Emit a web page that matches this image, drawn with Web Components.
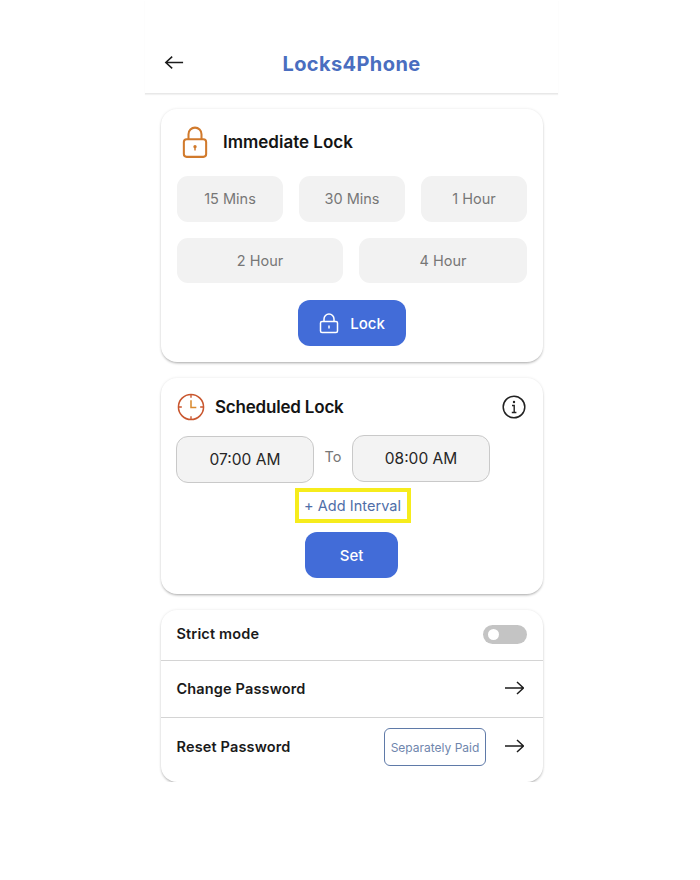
<!DOCTYPE html>
<html>
<head>
<meta charset="utf-8">
<style>
html,body{margin:0;padding:0;background:#fff}
body{font-family:Inter,"Liberation Sans",sans-serif;color:#161616}
</style>
</head>
<body>
<lock-app>
  <app-header slot="header" title="Locks4Phone"></app-header>

  <lock-card style="height:253px;margin-top:15px">
    <card-title gap="15" style="margin-top:-1px">
      <svg slot="icon" style="margin-left:5px" width="26" height="33" viewBox="0 0 28 35" fill="none" stroke="#d17a2c" stroke-width="2.200"><rect x="2" y="14" width="24" height="19" rx="3"/><path d="M7 14V8.500a7 7 0 0 1 14 0V14"/><circle cx="14" cy="22" r="1.800" fill="#d17a2c" stroke="none"/><path d="M14 22v4" stroke-width="1.600"/></svg>
      Immediate Lock
    </card-title>
    <div style="display:grid;grid-template-columns:repeat(3,1fr);gap:16px;margin-top:16px">
      <time-chip>15 Mins</time-chip><time-chip>30 Mins</time-chip><time-chip>1 Hour</time-chip>
    </div>
    <div style="display:grid;grid-template-columns:166px 1fr;gap:16px;margin-top:16px">
      <time-chip>2 Hour</time-chip><time-chip>4 Hour</time-chip>
    </div>
    <div style="display:flex;justify-content:center;margin-top:17px">
      <blue-button width="108" style="gap:11px">
        <svg width="20" height="21" viewBox="0 0 20 21" fill="none" stroke="#fff" stroke-width="1.500"><rect x="1.500" y="8.500" width="17" height="11" rx="1.500"/><path d="M5 8.500V6a5 5 0 0 1 10 0v2.500"/><path d="M10 12.500v3"/></svg>
        Lock
      </blue-button>
    </div>
  </lock-card>

  <lock-card style="height:216px;margin-top:16px">
    <card-title gap="10" style="margin-top:-5px;letter-spacing:-.2px">
      <svg slot="icon" width="28" height="28" viewBox="0 0 29 29" fill="none" stroke="#c9572f" stroke-width="1.600"><circle cx="14.500" cy="14.500" r="13"/><path d="M14.500 1.500v3.500M14.500 24v3.500M1.500 14.500H5M24 14.500h3.500" stroke-width="1.400"/><path d="M14.500 7.500v7.500h5.500" stroke="#d98a2e"/></svg>
      Scheduled Lock
      <svg slot="end" style="margin-right:1px" width="24" height="24" viewBox="0 0 24 24" fill="none" stroke="#222" stroke-width="1.500"><circle cx="12" cy="12" r="10.800"/><path d="M10 10.500h2.200V17.500M9.800 17.500h4.600" stroke-width="1.400"/><circle cx="12" cy="7" r="1.200" fill="#222" stroke="none"/></svg>
    </card-title>
    <div style="display:flex;margin:11px 0 0 -1px;height:47px;align-items:flex-start">
      <time-box>07:00 AM</time-box>
      <span style="width:38px;text-align:center;font-size:14.500px;margin-top:11px;line-height:20px;color:#777">To</span>
      <time-box style="margin-top:-1px">08:00 AM</time-box>
    </div>
    <div style="display:flex;justify-content:center;margin:5px 0 0 1px">
      <add-interval>+ Add Interval</add-interval>
    </div>
    <div style="display:flex;justify-content:center;margin-top:9px;margin-left:-1px">
      <blue-button width="93">Set</blue-button>
    </div>
  </lock-card>

  <lock-card flush style="height:172px;margin-top:16px">
    <setting-row height="50" style="padding-bottom:2px">Strict mode<toggle-switch slot="end"></toggle-switch></setting-row>
    <setting-row height="57" line>Change Password<arrow-icon slot="end"></arrow-icon></setting-row>
    <setting-row height="65" line style="padding-bottom:6px">Reset Password<paid-badge slot="end">Separately Paid</paid-badge><arrow-icon slot="end"></arrow-icon></setting-row>
  </lock-card>
</lock-app>

<script>
class LockApp extends HTMLElement{
  constructor(){
    super();
    this.attachShadow({mode:'open'}).innerHTML=`
<style>
:host{display:block;width:413px;margin-left:145px}
.cards{padding:0 15px 0 16px;display:flex;flex-direction:column}
</style>
<slot name="header"></slot>
<div class="cards"><slot></slot></div>`;
  }
}

class AppHeader extends HTMLElement{
  connectedCallback(){
    this.attachShadow({mode:'open'}).innerHTML=`
<style>
:host{display:flex;align-items:center;justify-content:center;position:relative;height:94px;padding-top:32px;box-sizing:border-box;border-bottom:1px solid #e8e8e8;box-shadow:0 1px 1px rgba(0,0,0,.05)}
h1{margin:0;font-size:20px;font-weight:700;color:#4a6ec0;letter-spacing:.4px;line-height:28px;margin-top:2px}
svg{position:absolute;left:19px;top:55px}
</style>
<svg width="20" height="15" viewBox="0 0 22 16" fill="none" stroke="#1c1c1c" stroke-width="1.700"><path d="M21 8H2M9 1.500 2 8l7 6.500"/></svg>
<h1>${this.getAttribute('title')}</h1>`;
  }
}

class LockCard extends HTMLElement{
  constructor(){
    super();
    this.attachShadow({mode:'open'}).innerHTML=`
<style>
:host{display:block;box-sizing:border-box;width:382px;background:#fff;border-radius:16px;padding:16px;box-shadow:0 2px 3px -1px rgba(0,0,0,.32),0 0 3px rgba(0,0,0,.1)}
:host([flush]){padding:0}
</style>
<slot></slot>`;
  }
}

class CardTitle extends HTMLElement{
  connectedCallback(){
    this.attachShadow({mode:'open'}).innerHTML=`
<style>
:host{display:flex;align-items:center;gap:${this.getAttribute('gap')}px;font-size:17px;font-weight:600;color:#141414;height:36px}
.text{flex:1}
::slotted(svg){display:block;flex:none}
</style>
<slot name="icon"></slot><span class="text"><slot></slot></span><slot name="end"></slot>`;
  }
}

class TimeChip extends HTMLElement{
  constructor(){
    super();
    this.attachShadow({mode:'open'}).innerHTML=`
<style>
:host{display:flex;align-items:center;justify-content:center;height:45.500px;background:#f2f2f2;border-radius:11px;font-size:14.500px;color:#777}
</style>
<slot></slot>`;
  }
}

class BlueButton extends HTMLElement{
  connectedCallback(){
    this.attachShadow({mode:'open'}).innerHTML=`
<style>
:host{display:flex;align-items:center;justify-content:center;gap:12px;width:${this.getAttribute('width')}px;height:46px;background:#426cd8;border-radius:12px;color:#fff;font-size:15px;font-weight:500}
</style>
<slot></slot>`;
  }
}

class TimeBox extends HTMLElement{
  constructor(){
    super();
    this.attachShadow({mode:'open'}).innerHTML=`
<style>
:host{display:flex;align-items:center;justify-content:center;box-sizing:border-box;width:138px;height:47px;background:#f3f3f3;border:1px solid #c9c9c9;border-radius:12px;font-size:15.500px;color:#262626}
</style>
<slot></slot>`;
  }
}

class AddInterval extends HTMLElement{
  constructor(){
    super();
    this.attachShadow({mode:'open'}).innerHTML=`
<style>
:host{display:flex;align-items:center;justify-content:center;box-sizing:border-box;width:116px;height:35px;border:4px solid #f6ec1c;font-size:14.500px;letter-spacing:.05px;color:#4f6ea8;white-space:nowrap}
</style>
<slot></slot>`;
  }
}

class SettingRow extends HTMLElement{
  connectedCallback(){
    this.attachShadow({mode:'open'}).innerHTML=`
<style>
:host{display:flex;align-items:center;box-sizing:border-box;height:${this.getAttribute('height')}px;padding:0 16px 0 15.500px;font-size:14.500px;font-weight:600;letter-spacing:.15px;color:#1a1a1a}
:host([line]){border-top:1px solid #d4d4d4}
.text{flex:1;margin-bottom:2px}
.end{display:flex;align-items:center;gap:19px}
</style>
<span class="text"><slot></slot></span><span class="end"><slot name="end"></slot></span>`;
  }
}

class ToggleSwitch extends HTMLElement{
  constructor(){
    super();
    this.attachShadow({mode:'open'}).innerHTML=`
<style>
:host{display:block;position:relative;width:44px;height:19px;background:#c4c4c4;border-radius:10px}
i{position:absolute;left:5px;top:4px;width:11px;height:11px;border-radius:50%;background:#fff}
</style>
<i></i>`;
  }
}

class ArrowIcon extends HTMLElement{
  constructor(){
    super();
    this.attachShadow({mode:'open'}).innerHTML=`
<style>
:host{display:block;width:19px;height:14px;margin:0 3px 2px 0}
svg{display:block}
</style>
<svg width="19" height="14" viewBox="0 0 19 14" fill="none" stroke="#1c1c1c" stroke-width="1.500"><path d="M0 7h18M12 1l6.500 6-6.500 6"/></svg>`;
  }
}

class PaidBadge extends HTMLElement{
  constructor(){
    super();
    this.attachShadow({mode:'open'}).innerHTML=`
<style>
:host{display:flex;align-items:center;justify-content:center;box-sizing:border-box;width:102px;height:38px;border:1px solid #5f7aa8;border-radius:6px;font-size:12px;font-weight:400;letter-spacing:0;color:#6f86ad;white-space:nowrap}
</style>
<slot></slot>`;
  }
}

customElements.define('lock-app',LockApp);
customElements.define('app-header',AppHeader);
customElements.define('lock-card',LockCard);
customElements.define('card-title',CardTitle);
customElements.define('time-chip',TimeChip);
customElements.define('blue-button',BlueButton);
customElements.define('time-box',TimeBox);
customElements.define('add-interval',AddInterval);
customElements.define('setting-row',SettingRow);
customElements.define('toggle-switch',ToggleSwitch);
customElements.define('arrow-icon',ArrowIcon);
customElements.define('paid-badge',PaidBadge);
</script>
</body>
</html>
